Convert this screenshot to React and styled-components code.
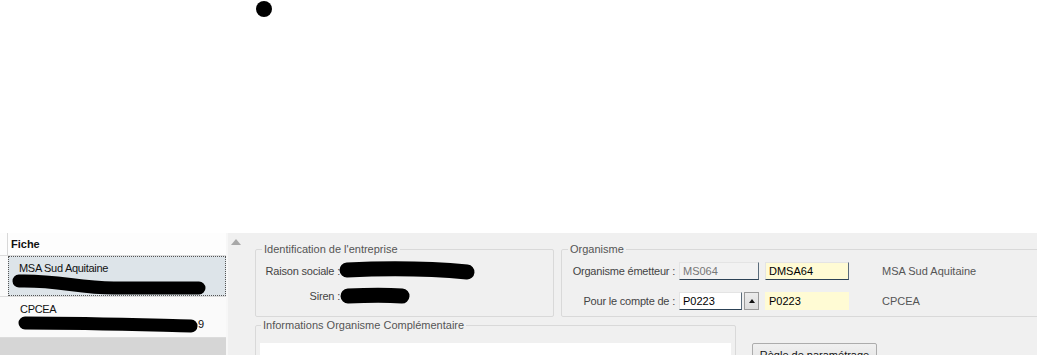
import React from "react";
import styled, { createGlobalStyle } from "styled-components";

const GlobalStyle = createGlobalStyle`
  html, body {
    margin: 0;
    padding: 0;
    background: #ffffff;
  }
  body {
    font-family: "Liberation Sans", Arial, sans-serif;
    font-size: 11px;
    color: #333;
  }
`;

const Page = styled.div`
  width: 1037px;
  height: 355px;
  overflow: hidden;
  display: flex;
  flex-direction: column;
`;

const TopArea = styled.div`
  height: 233px;
  padding: 1px 0 0 256px;
  box-sizing: border-box;
  background: #fff;
`;

const Dot = styled.div`
  width: 16px;
  height: 16px;
  border-radius: 50%;
  background: #000;
`;

const Main = styled.div`
  flex: 1;
  display: flex;
  min-height: 0;
`;

const Sidebar = styled.div`
  width: 226px;
  flex-shrink: 0;
  background: #fafafa;
  display: flex;
  flex-direction: column;
  border-right: 2px solid #f7f7f7;
`;

const HeaderRow = styled.div`
  height: 22px;
  display: flex;
  border-bottom: 1px solid #dcdcdc;
  background: #fdfdfd;
`;

const Indicator = styled.div`
  width: 7px;
  flex-shrink: 0;
  border-right: 1px solid ${(p) => (p.$line ? "#d8d8d8" : "transparent")};
`;

const HeaderText = styled.div`
  padding-left: 3px;
  font-weight: bold;
  font-size: 11px;
  color: #111;
  line-height: 22px;
`;

const Row = styled.div`
  height: 40px;
  display: flex;
  border-bottom: 1px solid #dcdcdc;
`;

const RowBody = styled.div`
  flex: 1;
  position: relative;
  padding: 5px 0 0 ${(p) => (p.$selected ? "10px" : "11px")};
  background: ${(p) => (p.$selected ? "#dde4e9" : "#fafafa")};
  border: ${(p) => (p.$selected ? "1px dotted #555" : "1px solid transparent")};
  color: #111;
`;

const RowTitle = styled.div`
  line-height: 13px;
  letter-spacing: -0.3px;
`;

const Blob = styled.svg`
  position: absolute;
  left: 0;
  top: 0;
  overflow: visible;
`;

const TailDigit = styled.span`
  position: absolute;
  left: 189px;
  top: 20px;
  line-height: 13px;
`;

const Filler = styled.div`
  flex: 1;
  background: #d6d6d6;
`;

const Content = styled.div`
  flex: 1;
  display: flex;
  background: #f0f0f0;
  padding-top: 10px;
  min-width: 0;
  overflow: hidden;
`;

const ArrowCol = styled.div`
  width: 27px;
  flex-shrink: 0;
  padding: 0 0 0 3px;
  box-sizing: border-box;
`;

const UpArrow = styled.div`
  width: 0;
  height: 0;
  border-left: 5px solid transparent;
  border-right: 5px solid transparent;
  border-bottom: 6px solid #a8a8a8;
  margin-top: -4px;
`;

const Groups = styled.div`
  display: flex;
  flex-direction: column;
  gap: 2px;
`;

const GroupLine = styled.div`
  display: flex;
  align-items: flex-start;
  gap: ${(p) => p.$gap || 0}px;
`;

const Group = styled.fieldset`
  margin: 0;
  width: ${(p) => p.$w}px;
  box-sizing: border-box;
  border: 1px solid #d9d9d9;
  border-radius: 2px;
  padding: ${(p) => p.$pad || "0 0 0 6px"};
  flex-shrink: 0;
`;

const Legend = styled.legend`
  padding: 0 2px;
  margin-left: ${(p) => p.$ml || 0}px;
  color: #555;
  line-height: 13px;
`;

const FormRows = styled.div`
  display: flex;
  flex-direction: column;
  gap: ${(p) => p.$gap}px;
  padding: ${(p) => p.$pad};
`;

const FieldRow = styled.div`
  display: flex;
  align-items: center;
  height: 18px;
`;

const Label = styled.div`
  width: ${(p) => p.$w}px;
  text-align: right;
  margin-right: ${(p) => p.$mr ?? 4}px;
  color: #444;
  white-space: nowrap;
  flex-shrink: 0;
  letter-spacing: -0.2px;
`;

const Redacted = styled.svg`
  display: block;
  overflow: visible;
`;

const Input = styled.div`
  width: ${(p) => p.$w}px;
  height: 18px;
  box-sizing: border-box;
  flex-shrink: 0;
  padding: 0 0 0 3px;
  line-height: 17px;
  font-size: 11px;
  background: ${(p) =>
    p.$kind === "yellow" ? "#fffbd4" : p.$kind === "disabled" ? "#f2f2f2" : "#ffffff"};
  color: ${(p) => (p.$kind === "disabled" ? "#777" : "#000")};
  border-top: 1px solid ${(p) => (p.$flat ? "transparent" : "#e4e4e4")};
  border-left: 1px solid ${(p) => (p.$flat ? "transparent" : "#e4e4e4")};
  border-right: 1px solid ${(p) => (p.$flat ? "transparent" : "#5a6b7a")};
  border-bottom: 1px solid ${(p) => (p.$flat ? "transparent" : "#2c4256")};
  margin-right: ${(p) => p.$mr ?? 0}px;
`;

const SpinButton = styled.div`
  width: 15px;
  height: 18px;
  box-sizing: border-box;
  margin-left: 2px;
  margin-right: 6px;
  background: linear-gradient(#ececec, #dcdcdc);
  border: 1px solid #9a9a9a;
  display: flex;
  align-items: center;
  justify-content: center;
  flex-shrink: 0;
`;

const SpinArrow = styled.div`
  width: 0;
  height: 0;
  border-left: 3px solid transparent;
  border-right: 3px solid transparent;
  border-bottom: 4px solid #111;
`;

const Description = styled.div`
  margin-left: 33px;
  color: #555;
  white-space: nowrap;
`;

const WhiteArea = styled.div`
  height: 30px;
  margin: 11px 4px 0 -1px;
  background: #ffffff;
`;

const ActionButton = styled.button`
  margin-top: 24px;
  width: 125px;
  height: 23px;
  font-family: "Liberation Sans", Arial, sans-serif;
  font-size: 11px;
  color: #111;
  background: linear-gradient(#f0f0f0, #e2e2e2);
  border: 1px solid #acacac;
  border-radius: 2px;
  padding: 0;
  flex-shrink: 0;
`;

function MarkerStroke({ w, h, d, sw }) {
  return (
    <Redacted width={w} height={h}>
      <path d={d} stroke="#000" strokeWidth={sw} strokeLinecap="round" fill="none" />
    </Redacted>
  );
}

export default function App() {
  return (
    <>
      <GlobalStyle />
      <Page>
        <TopArea>
          <Dot />
        </TopArea>
        <Main>
          <Sidebar>
            <HeaderRow>
              <Indicator $line />
              <HeaderText>Fiche</HeaderText>
            </HeaderRow>
            <Row>
              <Indicator />
              <RowBody $selected>
                <RowTitle>MSA Sud Aquitaine</RowTitle>
                <Blob width="200" height="40">
                  <path
                    d="M10,24 C50,23 68,31 105,31 L190,31"
                    stroke="#000"
                    strokeWidth="13"
                    strokeLinecap="round"
                    fill="none"
                  />
                </Blob>
              </RowBody>
            </Row>
            <Row>
              <Indicator />
              <RowBody>
                <RowTitle>CPCEA</RowTitle>
                <Blob width="200" height="40">
                  <path
                    d="M16,25 C80,25 140,27 182,28"
                    stroke="#000"
                    strokeWidth="13"
                    strokeLinecap="round"
                    fill="none"
                  />
                </Blob>
                <TailDigit>9</TailDigit>
              </RowBody>
            </Row>
            <Filler />
          </Sidebar>
          <Content>
            <ArrowCol>
              <UpArrow style={{ marginTop: 0, position: "relative", top: -4 }} />
            </ArrowCol>
            <Groups>
              <GroupLine $gap={7}>
                <Group $w={299}>
                  <Legend>Identification de l'entreprise</Legend>
                  <FormRows $gap={7} $pad="6px 0 11px 0">
                    <FieldRow>
                      <Label $w={78} $mr={0}>Raison sociale :</Label>
                      <MarkerStroke w={134} h={18} sw={15} d="M7,8 C50,6 95,7 127,10" />
                    </FieldRow>
                    <FieldRow>
                      <Label $w={78} $mr={0}>Siren :</Label>
                      <MarkerStroke w={70} h={18} sw={15} d="M8,9 C30,8 48,8 62,9" />
                    </FieldRow>
                  </FormRows>
                </Group>
                <Group $w={490} $pad="0 0 0 3px">
                  <Legend $ml={3}>Organisme</Legend>
                  <FormRows $gap={12} $pad="6px 0 6px 0">
                    <FieldRow>
                      <Label $w={110}>Organisme émetteur :</Label>
                      <Input $w={80} $kind="disabled" $mr={6}>MS064</Input>
                      <Input $w={84} $kind="yellow">DMSA64</Input>
                      <Description>MSA Sud Aquitaine</Description>
                    </FieldRow>
                    <FieldRow>
                      <Label $w={110}>Pour le compte de :</Label>
                      <Input $w={63}>P0223</Input>
                      <SpinButton>
                        <SpinArrow />
                      </SpinButton>
                      <Input $w={84} $kind="yellow" $flat>P0223</Input>
                      <Description>CPCEA</Description>
                    </FieldRow>
                  </FormRows>
                </Group>
              </GroupLine>
              <GroupLine $gap={16}>
                <Group $w={481} $pad="0 0 0 5px">
                  <Legend>Informations Organisme Complémentaire</Legend>
                  <WhiteArea />
                </Group>
                <ActionButton>Règle de paramétrage</ActionButton>
              </GroupLine>
            </Groups>
          </Content>
        </Main>
      </Page>
    </>
  );
}
